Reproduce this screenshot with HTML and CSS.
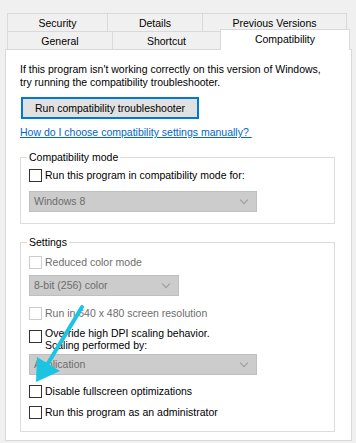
FILE: index.html
```html
<!DOCTYPE html>
<html lang="en">
<head>
<meta charset="utf-8">
<title>Properties - Compatibility</title>
<link rel="stylesheet" href="styles.css">
</head>
<body>
	<!-- Tab strip: back row first, front row holds the selected tab -->
	<div class="tabs">
		<div class="tab_row back">
			<div class="tab" style="width: 101px;">Security</div>
			<div class="tab" style="width: 96px;">Details</div>
			<div class="tab" style="width: 145px;">Previous Versions</div>
		</div>
		<div class="tab_row front">
			<div class="tab" style="width: 106px;">General</div>
			<div class="tab" style="width: 109px;">Shortcut</div>
			<div class="tab selected" style="width: 130px;">Compatibility</div>
		</div>
	</div>

	<div class="panel">
		<p class="intro">If this program isn't working correctly on this version of Windows,<br>try running the compatibility troubleshooter.</p>
		<button class="troubleshoot">Run compatibility troubleshooter</button>
		<a class="help_link" href="#">How do I choose compatibility settings manually? </a>

		<fieldset class="group compat">
			<legend>Compatibility mode</legend>
			<label class="check row_first"><span class="box"></span>Run this program in compatibility mode for:</label>
			<div class="dropdown wide sel_mode">Windows 8<span class="chev"></span></div>
		</fieldset>

		<fieldset class="group settings">
			<legend>Settings</legend>
			<label class="check disabled row_first"><span class="box"></span>Reduced color mode</label>
			<div class="dropdown narrow sel_color">8-bit (256) color<span class="chev"></span></div>
			<label class="check disabled row_640"><span class="box"></span>Run in 640 x 480 screen resolution</label>
			<label class="check multi row_dpi"><span class="box"></span><span>Override high DPI scaling behavior.<br>Scaling performed by:</span></label>
			<div class="dropdown wide sel_dpi">Application<span class="chev"></span></div>
			<label class="check row_full"><span class="box"></span>Disable fullscreen optimizations</label>
			<label class="check row_admin"><span class="box"></span>Run this program as an administrator</label>
		</fieldset>
	</div>

	<!-- Annotation arrow drawn over the dialog -->
	<svg class="arrow" width="356" height="443" viewBox="0 0 356 443">
		<line x1="82" y1="307" x2="47" y2="365" stroke="#1bc5e2" stroke-width="4" stroke-linecap="round"/>
		<polygon points="36,382 37,357 60,371" fill="#1bc5e2"/>
	</svg>
</body>
</html>
```

FILE: styles.css
```css
* {
	box-sizing: border-box;
}

html, body {
	margin: 0;
	padding: 0;
}

body {
	width: 356px;
	height: 443px;
	background-color: #f0f0f0;
	font-family: "Liberation Sans", Arial, sans-serif;
	font-size: 10.5px;
	line-height: 13px;
	color: #000;
	position: relative;
	overflow: hidden;
	white-space: nowrap;
}

.tabs {
	padding: 13px 0 0 7px;
	height: 49px;
}

.tab_row {
	display: flex;
}

.tab {
	height: 18px;
	line-height: 19px;
	text-align: center;
	border: 1px solid #d9d9d9;
	border-bottom: none;
	margin-right: -1px;
	background-color: #f0f0f0;
}

.tab_row.front {
	align-items: flex-end;
	height: 18px;
}

.tab.selected {
	height: 21px;
	line-height: 18px;
	background-color: #fff;
	position: relative;
	z-index: 1;
	margin-top: -2px;
	margin-bottom: -1px;
}

.panel {
	margin-left: 5px;
	width: 347px;
	height: 392px;
	border: 1px solid #d9d9d9;
	background-color: #fff;
	padding: 13px 17px 0 14px;
}

.intro {
	margin: 0;
	line-height: 13px;
}

.troubleshoot {
	display: block;
	margin: 8px 0 0 1px;
	width: 178px;
	height: 22px;
	padding: 0;
	border: 2px solid #0078d7;
	background-color: #e1e1e1;
	font-family: inherit;
	font-size: 10.5px;
	color: #000;
}

.help_link {
	display: block;
	width: max-content;
	margin-top: 7px;
	line-height: 13px;
	color: #0066cc;
	text-decoration: underline;
	white-space: pre;
}

.group {
	margin: 12px 0 0 0;
	padding: 0 8px 0 8px;
	border: 1px solid #dcdcdc;
	width: 315px;
}

.group legend {
	padding: 0 2px;
	margin-left: -2px;
	line-height: 13px;
}

.compat {
	padding-bottom: 11px;
}

.settings {
	margin-top: 12px;
	padding-bottom: 12px;
}

.check {
	display: flex;
	align-items: center;
	line-height: 13px;
	height: 13px;
}

.check .box {
	width: 13px;
	height: 13px;
	border: 1px solid #333;
	background-color: #fff;
	margin-right: 3px;
	flex: none;
}

.check.disabled {
	color: #6d6d6d;
}

.check.disabled .box {
	border-color: #cccccc;
}

.check.multi {
	height: 26px;
	align-items: flex-start;
	line-height: 12px;
}

.check.multi .box {
	margin-top: 3px;
}

.dropdown {
	position: relative;
	height: 21px;
	line-height: 19px;
	padding-left: 4px;
	background-color: #cccccc;
	border: 1px solid #bfbfbf;
	color: #6d6d6d;
}

.dropdown.wide {
	width: 228px;
}

.dropdown.narrow {
	width: 150px;
}

.chev {
	position: absolute;
	right: 9px;
	top: 5px;
	width: 6px;
	height: 6px;
	border-right: 1px solid #9a9a9a;
	border-bottom: 1px solid #9a9a9a;
	transform: rotate(45deg);
}

.compat .row_first {
	margin-top: 5px;
}

.sel_mode {
	margin-top: 9px;
}

.settings .row_first {
	margin-top: 7px;
}

.sel_color {
	margin-top: 6px;
}

.row_640 {
	margin-top: 11px;
}

.row_dpi {
	margin-top: 7px;
}

.sel_dpi {
	margin-top: 1px;
}

.row_full {
	margin-top: 10px;
}

.row_admin {
	margin-top: 8px;
}

.arrow {
	position: absolute;
	left: 0;
	top: 0;
	pointer-events: none;
	z-index: 5;
}
```
